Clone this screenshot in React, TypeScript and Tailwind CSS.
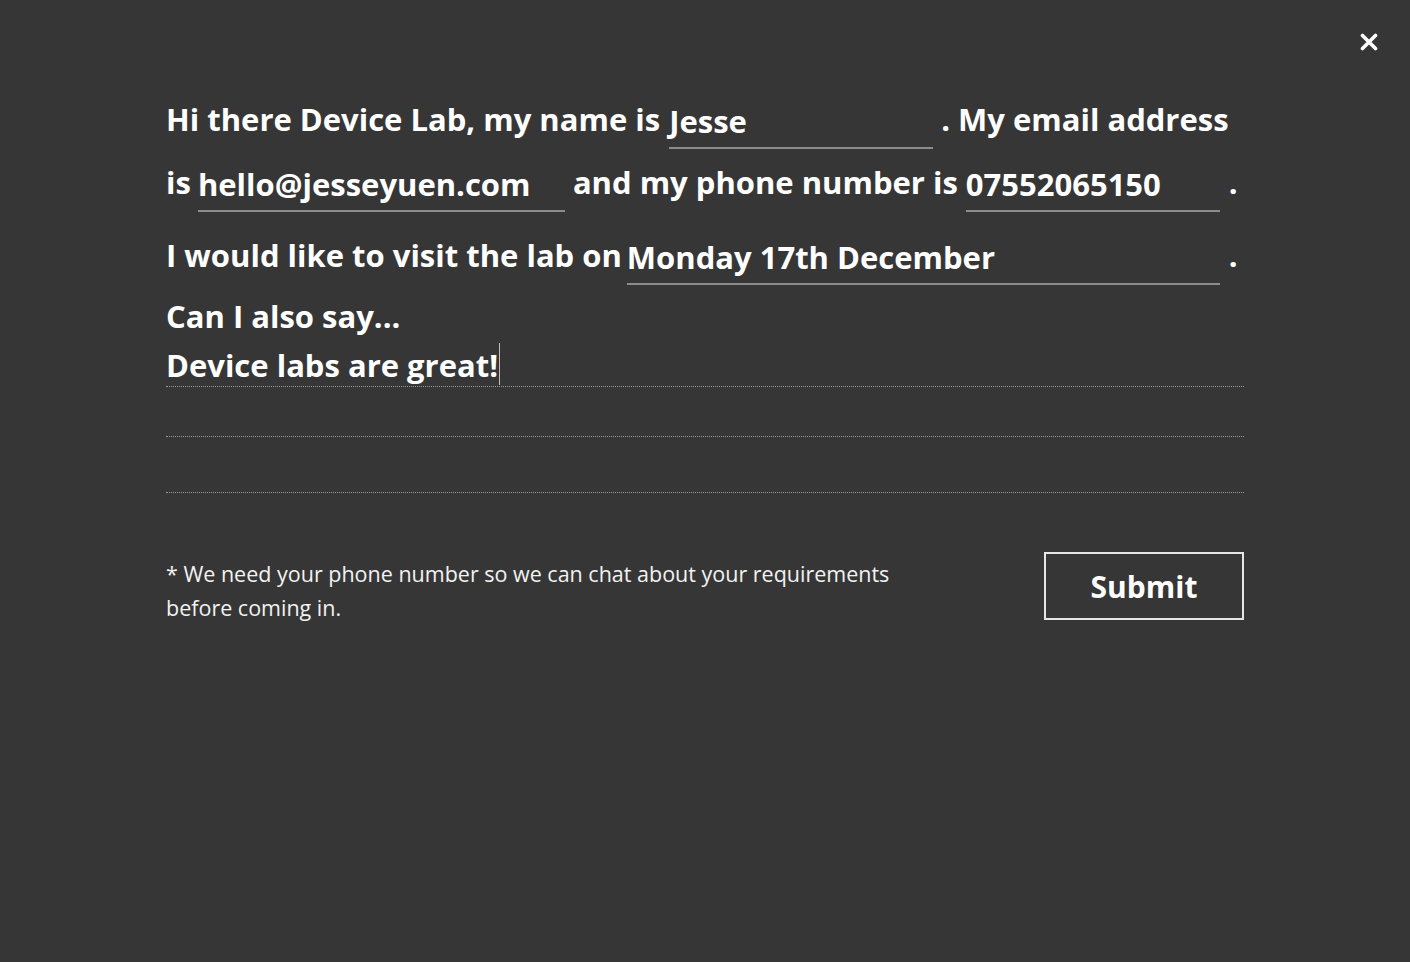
import React, { useState } from 'react';

const font = { fontFamily: '"Open Sans", Lato, "Liberation Sans", sans-serif' };

function LineInput({ value, width }: { value: string; width: string }) {
  return (
    <span className={`${width} inline-block border-b-2 border-[#8c8c8c] pb-[8px] leading-none`}>
      <span className="block h-[38px] leading-[40px] text-white">{value}</span>
    </span>
  );
}

export default function App() {
  const [message] = useState('Device labs are great!');

  return (
    <div className="min-h-[962px] w-full bg-[#363636] text-white" style={font}>
      {/* close button */}
      <div className="flex justify-end pt-[33px] pr-[32px]">
        <button type="button" className="w-[18px] h-[18px] cursor-pointer" title="Close">
          <svg viewBox="0 0 18 18" width="18" height="18">
            <path d="M2.5 2.5 L15.5 15.5 M15.5 2.5 L2.5 15.5" stroke="#ffffff" strokeWidth="3.6" strokeLinecap="round" />
          </svg>
        </button>
      </div>

      <form className="mx-auto w-[1078px] pt-[41px] text-[31px] font-bold" onSubmit={(e) => e.preventDefault()}>
        {/* row 1 */}
        <div className="flex items-end h-[57px] whitespace-nowrap">
          <span className="pb-[14px] leading-none">Hi there Device Lab, my name is</span>
          <span className="ml-[9px]"><LineInput value="Jesse" width="w-[264px]" /></span>
          <span className="ml-[8px] pb-[14px] leading-none">. My email address</span>
        </div>

        {/* row 2 */}
        <div className="flex items-end h-[63px] whitespace-nowrap">
          <span className="pb-[14px] leading-none">is</span>
          <span className="ml-[7px]"><LineInput value="hello@jesseyuen.com" width="w-[367px]" /></span>
          <span className="ml-[8px] pb-[14px] leading-none">and my phone number is</span>
          <span className="ml-[8px]"><LineInput value="07552065150" width="w-[254px]" /></span>
          <span className="ml-[9px] pb-[14px] leading-none">.</span>
        </div>

        {/* row 3 */}
        <div className="flex items-end h-[73px] whitespace-nowrap">
          <span className="pb-[14px] leading-none">I would like to visit the lab on</span>
          <span className="ml-[5px]"><LineInput value="Monday 17th December" width="w-[593px]" /></span>
          <span className="ml-[9px] pb-[14px] leading-none">.</span>
        </div>

        {/* message */}
        <div className="mt-[7px] leading-[48px]">Can I also say...</div>
        <div className="flex flex-col">
          <div className="h-[47px] border-b border-dotted border-[#9a9a9a] flex items-end pb-[1px]">
            <span className="leading-[40px]">{message}</span>
            <span className="w-px h-[42px] bg-[#bdbdbd] ml-[1px]" />
          </div>
          <div className="h-[50px] border-b border-dotted border-[#9a9a9a]" />
          <div className="h-[56px] border-b border-dotted border-[#9a9a9a]" />
        </div>

        {/* footer */}
        <div className="flex items-start justify-between mt-[59px]">
          <p className="w-[760px] pt-[5px] text-[21.5px] font-normal leading-[34px] text-[#f2f2f2]">
            * We need your phone number so we can chat about your requirements before coming in.
          </p>
          <button
            type="submit"
            className="w-[200px] h-[68px] border-2 border-[#e6e6e6] text-[30px] font-bold text-white cursor-pointer"
          >
            Submit
          </button>
        </div>
      </form>
    </div>
  );
}
